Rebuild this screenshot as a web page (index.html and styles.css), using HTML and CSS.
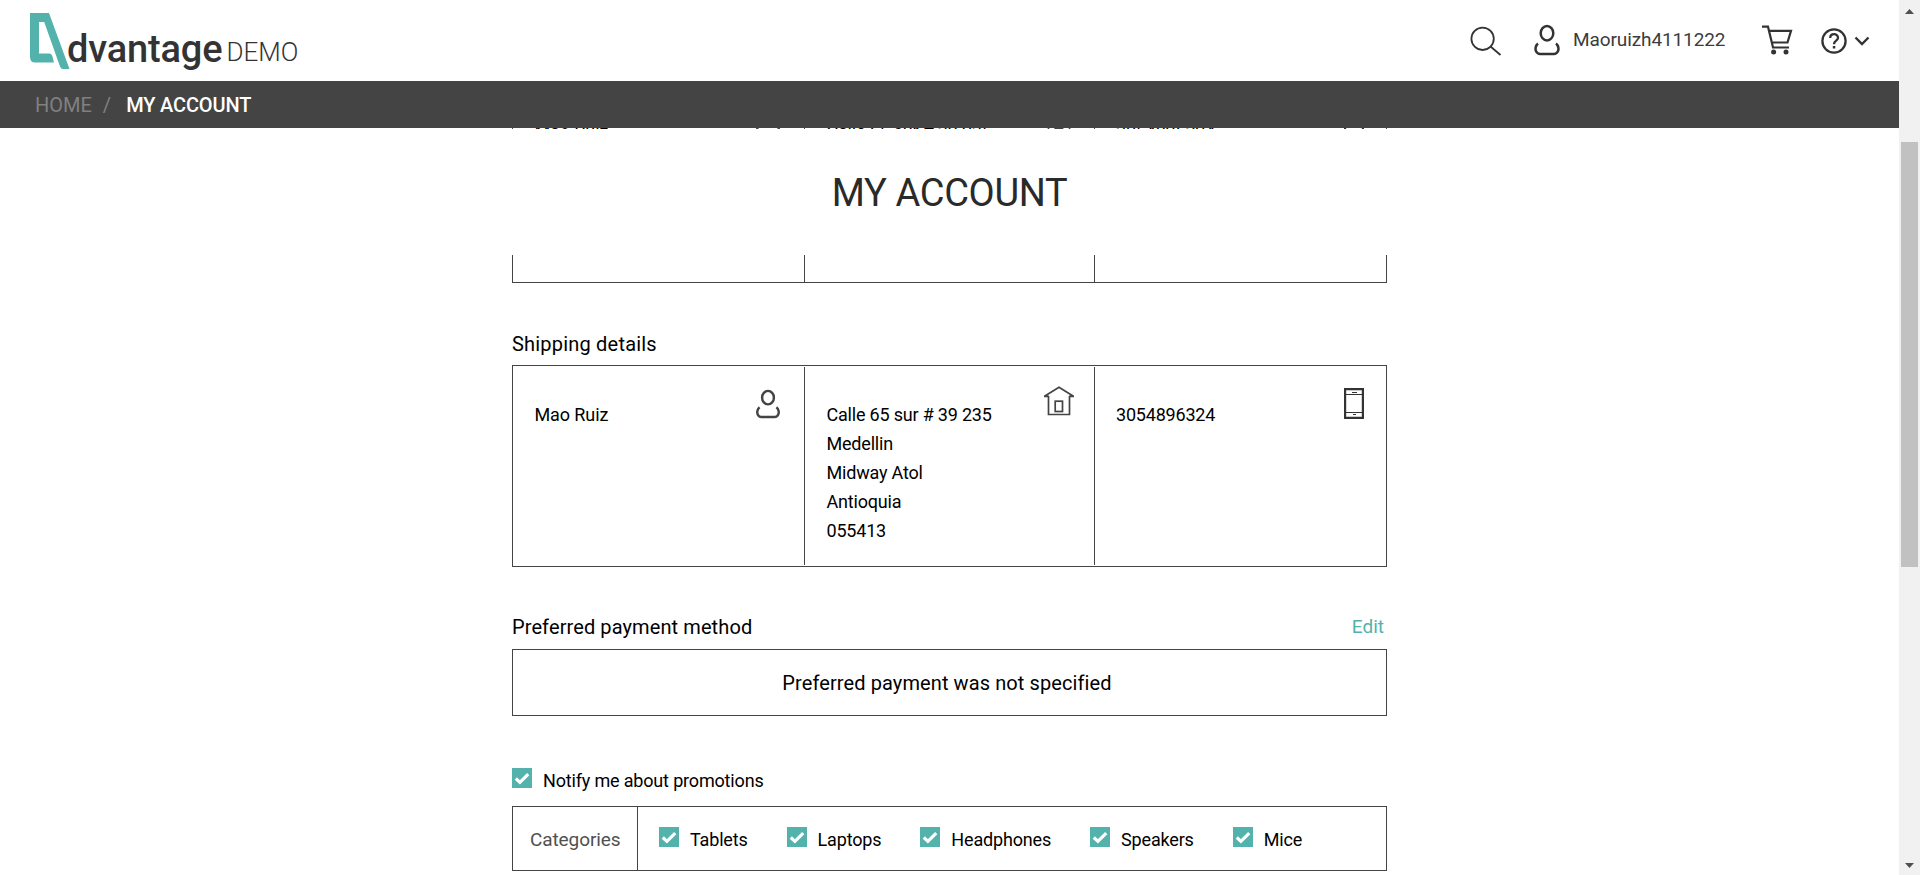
FILE: index.html
```html
<!DOCTYPE html>
<html lang="en">
<head>
<meta charset="utf-8">
<title>My Account</title>
<link rel="stylesheet" href="styles.css">
</head>
<body>
<svg class="defs" width="0" height="0">
  <symbol id="user" viewBox="0 0 26 32">
    <ellipse cx="13" cy="9.2" rx="6.3" ry="7.2"/>
    <path d="M4 19.5C1.4 21.5 1 25.5 2.2 27.5Q3.4 29.9 6 29.9H20Q22.600 29.9 23.8 27.500C25 25.500 24.600 21.500 22 19.500"/>
  </symbol>
  <symbol id="house" viewBox="0 0 32 30">
    <path d="M1.500 10.200 16 1.200 30.500 10.200M1 10.300H6M26 10.300H31M5.500 10V28.500H26.500V10" />
    <rect x="12.200" y="15.200" width="7.300" height="10.300"/>
  </symbol>
  <symbol id="phone" viewBox="0 0 20 31">
    <path class="thick" d="M1 1H19V30H1Z"/>
    <path class="thin" d="M1 6.500H19M1 24.500H19M8 4.500H13M9 26.500H12"/>
  </symbol>
  <symbol id="tick" viewBox="0 0 20 20">
    <path d="M3.800 10.500 7.900 14.300 16.200 6.100"/>
  </symbol>
</svg>
<div class="window">
  <div class="page">
    <header class="topbar">
      <a class="logo">
        <svg class="logo-mark" width="40" height="57" viewBox="0 0 40 57"><path fill="#54b2ad" fill-rule="evenodd" d="M0 0H19L39.500 56H33Q31 56 30 53.500L14.200 9H9V40.500H19.500Q21.500 40.500 22.300 43L24 49.500H5Q0 49.500 0 44Z"/></svg>
        <span class="brand">dvantage</span><span class="demo">DEMO</span>
      </a>
      <nav class="tools">
        <svg class="icon search" width="32" height="30" viewBox="0 0 32 30"><circle cx="12.600" cy="12.800" r="11.200"/><path d="M20.500 20.500 30.500 29"/></svg>
        <svg class="icon user" width="26" height="32"><use href="#user"/></svg>
        <span class="username">Maoruizh4111222</span>
        <svg class="icon cart" width="31" height="30" viewBox="0 0 31 30"><path d="M0 1.700H6L11 22.500H27M7.500 5.900H29L25.500 17.500H10"/><g class="fill"><circle cx="11.600" cy="27" r="2.500"/><circle cx="24" cy="27" r="2.500"/></g></svg>
        <svg class="icon help" width="26" height="26" viewBox="0 0 26 26"><circle cx="13" cy="13" r="11.600"/><path d="M9.200 10C9.200 5 17 5 17 9.800C17 12.800 13 12.500 13 16.200"/><rect class="fill" x="11.800" y="18" width="2.500" height="2.500"/></svg>
        <svg class="icon chevron" width="16" height="10" viewBox="0 0 16 10"><path d="M1.500 1.500 8 8 14.500 1.500"/></svg>
      </nav>
    </header>
    <div class="crumbs"><span class="home">HOME</span><span class="slash">/</span><span class="here">MY ACCOUNT</span></div>
    <main class="view">
      <h1 class="title">MY ACCOUNT</h1>
      <div class="content">
        <section class="card cols flush">
          <div class="cell"><p>Mao Ruiz</p><svg class="mark person" width="26" height="30"><use href="#user"/></svg></div>
          <div class="cell"><p>Calle 65 sur # 39 235</p><svg class="mark home-mark" width="32" height="30"><use href="#house"/></svg></div>
          <div class="cell"><p>3054896324</p><svg class="mark mobile" width="20" height="31"><use href="#phone"/></svg></div>
        </section>
        <div class="heading shipping"><h2>Shipping details</h2></div>
        <section class="card cols">
          <div class="cell"><p>Mao Ruiz</p><svg class="mark person" width="26" height="30"><use href="#user"/></svg></div>
          <div class="cell"><p>Calle 65 sur # 39 235<br>Medellin<br>Midway Atol<br>Antioquia<br>055413</p><svg class="mark home-mark" width="32" height="30"><use href="#house"/></svg></div>
          <div class="cell"><p>3054896324</p><svg class="mark mobile" width="20" height="31"><use href="#phone"/></svg></div>
        </section>
        <div class="heading payment"><h2>Preferred payment method</h2><a class="edit">Edit</a></div>
        <section class="card empty">Preferred payment was not specified</section>
        <label class="check notify"><svg class="box" width="20" height="20"><use href="#tick"/></svg><span>Notify me about promotions</span></label>
        <section class="card categories">
          <div class="label">Categories</div>
          <div class="options">
            <label class="check"><svg class="box" width="20" height="20"><use href="#tick"/></svg><span>Tablets</span></label>
            <label class="check"><svg class="box" width="20" height="20"><use href="#tick"/></svg><span>Laptops</span></label>
            <label class="check"><svg class="box" width="20" height="20"><use href="#tick"/></svg><span>Headphones</span></label>
            <label class="check"><svg class="box" width="20" height="20"><use href="#tick"/></svg><span>Speakers</span></label>
            <label class="check"><svg class="box" width="20" height="20"><use href="#tick"/></svg><span>Mice</span></label>
          </div>
        </section>
      </div>
    </main>
  </div>
  <aside class="scrollbar">
    <svg width="9" height="5" viewBox="0 0 9 5"><path d="M0 5 4.500 0 9 5Z"/></svg>
    <div class="track"><div class="thumb"></div></div>
    <svg width="9" height="5" viewBox="0 0 9 5"><path d="M0 0 4.500 5 9 0Z"/></svg>
  </aside>
</div>
</body>
</html>
```
FILE: styles.css
```css
* { box-sizing: border-box; }
body { margin: 0; font-family: Roboto, "Liberation Sans", sans-serif; color: #000; background: #fff; }
h1, h2, p { margin: 0; font-weight: 400; }
.defs { position: absolute; }
.window { display: flex; height: 875px; overflow: hidden; }
.page { flex: 1; display: flex; flex-direction: column; min-width: 0; }

.topbar { display: flex; justify-content: space-between; height: 81px; flex: none; padding: 0 29px 0 30px; }
.logo { display: flex; align-items: flex-start; }
.logo-mark { margin-top: 13px; }
.brand { font-size: 38px; font-weight: 500; line-height: 44px; margin: 27px 0 0 -3px; color: #333; letter-spacing: -0.15px; }
.demo { font-size: 26px; font-weight: 300; line-height: 30px; margin: 37px 0 0 4px; color: #333; }
.tools { display: flex; align-items: flex-start; }
.icon { fill: none; stroke: #333; stroke-width: 2; flex: none; }
.icon .fill { fill: #333; stroke: none; }
.search { margin-top: 26px; stroke-width: 1.800; }
.user { margin: 24px 0 0 32px; stroke-width: 2.500; }
.username { font-size: 19px; line-height: 24px; margin: 28px 0 0 13px; width: 154px; color: #3c3c3c; letter-spacing: -0.1px; }
.cart { margin: 25px 0 0 35px; stroke-width: 2.200; }
.help { margin: 28px 0 0 28px; stroke-width: 2.300; }
.chevron { margin: 36px 0 0 7px; stroke-width: 2.400; }

.crumbs { display: flex; height: 47px; flex: none; padding-left: 35px; background: #444; font-size: 20px; line-height: 49px; }
.home, .slash { color: #808080; }
.slash { margin-left: 11px; }
.here { color: #fff; font-weight: 500; margin-left: 15px; letter-spacing: -0.15px; }

.view { position: relative; flex: 1; overflow: hidden; }
.title { position: absolute; z-index: 1; top: 1px; left: 0; right: 0; height: 126px; padding-top: 41px; background: #fff; font-size: 38px; line-height: 46px; text-align: center; color: #2a2a2a; letter-spacing: -0.35px; }
.content { width: 875px; margin: -47px auto 0; }
.card { border: 1px solid #444; background: #fff; }
.cols { display: grid; grid-template-columns: 291px 290px 292px; height: 202px; padding: 1px 0; }
.cols.flush { padding: 2px 0 0; }
.cell { position: relative; padding: 33px 0 0 21.5px; font-size: 18px; line-height: 29px; letter-spacing: -0.2px; }
.cell + .cell { border-left: 1px solid #444; }
.cell:last-child { padding-left: 21px; }
.cell:first-child { letter-spacing: -0.1px; }
.mark { position: absolute; fill: none; stroke: #444; }
.person { right: 23px; top: 22px; stroke-width: 2.600; }
.home-mark { right: 19px; top: 19px; stroke-width: 1.700; }
.mobile { right: 22px; top: 21px; }
.thick { stroke: #333; stroke-width: 2.400; }
.thin { stroke: #333; stroke-width: 1; }
.heading { display: flex; justify-content: space-between; font-size: 20px; line-height: 24px; }
.heading h2 { font-size: 20px; letter-spacing: 0.1px; }
.shipping { margin: 49px 0 9px; }
.shipping h2 { letter-spacing: 0.2px; }
.payment { margin: 48px 0 10px; }
.edit { color: #54b2ad; font-size: 19px; margin-right: 3px; }
.empty { height: 67px; padding-right: 5px; font-size: 20px; line-height: 66px; text-align: center; letter-spacing: 0.1px; }
.check { display: flex; align-items: flex-start; font-size: 18px; line-height: 24px; letter-spacing: -0.17px; }
.check span { padding-top: 1px; }
.box { background: #54b2ad; fill: none; stroke: #fff; stroke-width: 3.200; flex: none; margin-right: 11px; }
.notify { margin: 52px 0 13px; }
.categories { display: flex; height: 65px; }
.label { width: 125px; border-right: 1px solid #444; padding-left: 17px; font-size: 19px; letter-spacing: -0.1px; line-height: 66px; color: #505050; }
.options { display: flex; gap: 39px; padding: 20px 0 0 21px; }

.scrollbar { display: flex; flex-direction: column; align-items: center; width: 21px; padding: 9px 0 7px; background: #f1f1f1; fill: #505050; }
.scrollbar svg { flex: none; }
.track { flex: 1; padding-top: 128px; }
.thumb { width: 17px; height: 425px; background: #c1c1c1; }
```
